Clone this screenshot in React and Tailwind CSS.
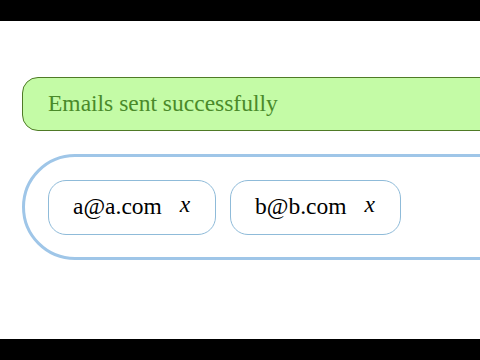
export default function App() {
  return (
    <div className="w-[480px] h-[360px] bg-white overflow-hidden flex flex-col font-['Liberation_Serif','Times_New_Roman',serif]">
      <div className="h-[21px] bg-black shrink-0" />
      <div className="flex-1 flex flex-col">
        <div className="mt-[56px] ml-[22px] w-[500px] h-[54px] bg-[#c4fba6] border border-[#4f7a26] rounded-l-[16px] flex items-center pl-[25px]">
          <span className="text-[23.5px] text-[#4a8a2a] leading-none font-['Liberation_Serif',serif]">Emails sent successfully</span>
        </div>
        <div className="mt-[23px] ml-[22px] w-[520px] h-[106px] border-[3px] border-[#9fc6e8] rounded-l-[53px] flex items-center pl-[23px] gap-[14px]">
          {[["a@a.com", "w-[168px]"], ["b@b.com", "w-[171px]"]].map(([e, w]) => (
            <div key={e} className={"h-[55px] border border-[#8fbbd9] rounded-[18px] flex items-center pl-[24px] " + w}>
              <span className="text-[23.5px] text-black leading-none font-['Liberation_Serif',serif]">{e}</span>
              <span className="text-[23.5px] italic text-black leading-none ml-[18px] -mt-[4px] font-['Liberation_Serif',serif]">x</span>
            </div>
          ))}
        </div>
      </div>
      <div className="h-[21px] bg-black shrink-0" />
    </div>
  );
}
